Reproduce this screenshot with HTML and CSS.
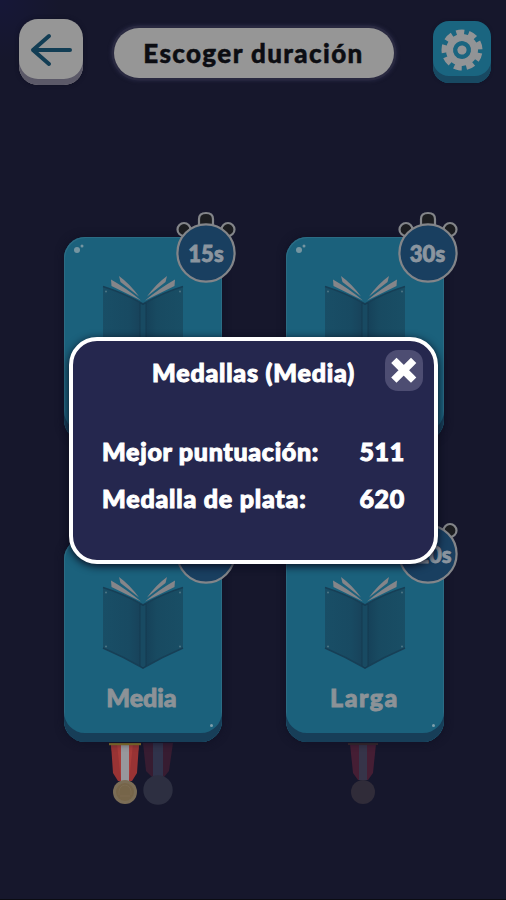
FILE: index.html
```html
<!DOCTYPE html>
<html lang="es">
<head>
<meta charset="utf-8">
<title>Escoger duración</title>
<link rel="stylesheet" href="styles.css">
</head>
<body>
<svg width="0" height="0" class="defs" aria-hidden="true">
  <defs>
    <linearGradient id="coverL"><stop offset="0" stop-color="#194e66"/><stop offset=".65" stop-color="#184a62"/><stop offset="1" stop-color="#184159"/></linearGradient>
    <linearGradient id="coverR"><stop offset="0" stop-color="#153f57"/><stop offset=".35" stop-color="#184a61"/><stop offset="1" stop-color="#194e65"/></linearGradient>
    <symbol id="book" viewBox="0 0 82 92">
      <path d="M9 3.500L9.500 10L39 24.500Q24 12 9 3.500Z M17 0L18.500 6L37 20.500Q28 8 17 0Z M73 3.500L72.500 10L43 24.500Q58 12 73 3.500Z M65 0L63.500 6L45 20.500Q54 8 65 0Z" fill="#858589"/>
      <path d="M1 10.500Q22 17 41 28V91Q22 80 1 71Z" fill="url(#coverL)"/>
      <path d="M81 10.500Q60 17 41 28V91Q60 80 81 71Z" fill="url(#coverR)"/>
      <path d="M1 10.500Q22 17 41 28Q60 17 81 10.500M1 71Q22 80 41 91Q60 80 81 71" fill="none" stroke="#173f56" stroke-width="1.600"/>
      <path d="M38 27L41 28.500L44 27V89L41 91L38 89Z" fill="#184a62" stroke="#143a51" stroke-width="1"/>
      <g fill="#4e7686"><circle cx="4" cy="15.500" r="1"/><circle cx="78" cy="15.500" r="1"/><circle cx="4" cy="69.500" r="1"/><circle cx="78" cy="69.500" r="1"/></g>
    </symbol>
    <symbol id="watch" viewBox="0 0 62 74">
      <g fill="#1c1d20" stroke="#838589" stroke-width="2.200">
        <circle cx="9" cy="18.500" r="6.500"/><circle cx="53" cy="18.500" r="6.500"/>
        <path d="M24 17V8Q24 2 31 2Q38 2 38 8V17Z"/>
      </g>
      <circle cx="31" cy="42" r="28.600" fill="#193f60" stroke="#838589" stroke-width="2.200"/>
    </symbol>
    <symbol id="medal" viewBox="0 0 32 62">
      <path d="M2 1H30L26 32L21 38H11L6 32Z" fill="#a83b39"/>
      <path d="M8 1L12 38H9L4 30L2 1ZM24 1L20 38H23L28 30L30 1Z" fill="#983334"/>
      <path d="M12 1H20V38H12Z" fill="#97979c"/>
      <path d="M0 0H32V2.200H0Z" fill="#9b8129"/>
      <circle cx="16" cy="49" r="12" fill="#7b6d56"/><circle cx="16" cy="49" r="9" fill="#766549"/>
      <path d="M10 52Q9 43 16 42Q23 43 22 52M11 53H21" fill="none" stroke="#7c6b51"/>
    </symbol>
  </defs>
</svg>
<div class="screen">
  <header class="topbar">
    <button class="key key-back" aria-label="Volver">
      <svg viewBox="0 0 64 60"><path d="M51 30H14M30 16L14 30L30 44" fill="none" stroke="#123d54" stroke-width="4" stroke-linecap="round" stroke-linejoin="round"/></svg>
    </button>
    <h1 class="heading"><span>Escoger duración</span></h1>
    <button class="key key-gear" aria-label="Ajustes">
      <svg viewBox="0 0 58 56">
        <g transform="translate(29 28) rotate(10)">
          <circle r="12.500" fill="none" stroke="#929496" stroke-width="7"/>
          <circle r="17" fill="none" stroke="#929496" stroke-width="7" stroke-dasharray="7.500 4.370"/>
          <circle r="4.600" fill="#929496"/>
        </g>
      </svg>
    </button>
  </header>

  <main class="levels">
    <article class="level">
      <div class="card"><svg class="book"><use href="#book"/></svg></div>
      <div class="timer"><svg><use href="#watch"/></svg><span>15s</span></div>
    </article>
    <article class="level">
      <div class="card"><svg class="book"><use href="#book"/></svg></div>
      <div class="timer"><svg><use href="#watch"/></svg><span>30s</span></div>
    </article>
    <article class="level">
      <div class="card"><svg class="book"><use href="#book"/></svg><h2 class="name name-media">Media</h2></div>
      <div class="medals">
        <svg class="medal"><use href="#medal"/></svg>
        <svg class="medal silver" viewBox="0 0 32 62">
          <path d="M1 0H31L27 28L22 34H10L4 28Z" fill="#371c31"/><path d="M11 0H21V34H11Z" fill="#30334b"/>
          <circle cx="16" cy="47" r="14.700" fill="#2d2f41"/>
        </svg>
      </div>
      <div class="timer"><svg><use href="#watch"/></svg><span>60s</span></div>
    </article>
    <article class="level">
      <div class="card"><svg class="book"><use href="#book"/></svg><h2 class="name name-larga">Larga</h2></div>
      <div class="medals medals-center">
        <svg class="medal" viewBox="0 0 32 62">
          <path d="M3 1H29L26 30L21 37H11L6 30Z" fill="#451e34"/><path d="M12 1H20V37H12Z" fill="#363449"/>
          <path d="M1 0H31V2H1Z" fill="#3c2b2d"/><circle cx="16" cy="49" r="12" fill="#302c39"/>
        </svg>
      </div>
      <div class="timer"><svg><use href="#watch"/></svg><span>120s</span></div>
    </article>
  </main>

  <section class="dialog" role="dialog" aria-label="Medallas">
    <h2 class="dialog-title">Medallas (Media)</h2>
    <button class="close" aria-label="Cerrar">
      <svg viewBox="0 0 38 41"><path d="M11.500 13L26 27.500M26 13L11.500 27.500" stroke="#fff" stroke-width="7.500" stroke-linecap="square"/></svg>
    </button>
    <dl class="scores">
      <div class="score"><dt>Mejor puntuación:</dt><dd>511</dd></div>
      <div class="score"><dt class="silver-row">Medalla de plata:</dt><dd>620</dd></div>
    </dl>
  </section>
</div>
</body>
</html>
```

FILE: styles.css
```css
* { box-sizing: border-box; margin: 0; padding: 0; }
body {
  font-family: Lato, "Open Sans", sans-serif;
  font-weight: 900;
  background: #16172c;
}
.defs { position: absolute; }
svg { display: block; }
button { border: 0; font: inherit; }
h1, h2 { font-weight: 900; }

.screen {
  position: relative;
  width: 506px;
  height: 900px;
  overflow: hidden;
  background: radial-gradient(circle at 0 0, #161738, #16172c 60px);
  border-bottom: 1px solid #0b0c12;
}

.topbar {
  display: flex;
  align-items: flex-start;
  justify-content: space-between;
  height: 212px;
  padding: 19px 15px 0 19px;
}
.key-back {
  width: 64px;
  height: 66px;
  border-radius: 19px;
  background: #969696;
  box-shadow: inset 0 -6px 0 #5b5968, 0 0 4px #101124;
}
.key-back svg { width: 64px; height: 60px; }
.heading {
  display: flex;
  align-items: center;
  justify-content: center;
  width: 280px;
  height: 50px;
  margin: 9px 0 0 -9px;
  border-radius: 25px;
  background: #969696;
  box-shadow: 0 0 0 2.5px #292940, 0 0 3px 4px #20213a;
  color: #0c0d12;
  font-size: 26px;
  letter-spacing: 1.4px;
  line-height: 50px;
  -webkit-text-stroke: .5px #0c0d12;
}
.key-gear {
  width: 58px;
  height: 62px;
  margin-top: 2px;
  border-radius: 16px;
  background: #1a6580;
  box-shadow: inset 0 -7px 0 #184962, 0 0 3px #10172a;
}
.key-back svg { margin-top: -4px; }
.key-gear svg { width: 58px; height: 56px; margin-top: -5px; }

.levels {
  display: grid;
  grid-template-columns: 172px 172px;
  grid-template-rows: 301px 301px;
  column-gap: 49.5px;
  padding-left: 64px;
}
.level { position: relative; padding-top: 25px; }
.card {
  position: relative;
  width: 158px;
  height: 204px;
  border-radius: 21px;
  background: #1b617c;
  box-shadow: inset 0 -9px 0 #173e58, inset 1px 1px 0 #2b6c84, inset -1px 0 0 #2b6c84, 0 0 8px #101124;
}
.card::before {
  content: "";
  position: absolute;
  left: 10px;
  top: 10px;
  width: 6px;
  height: 6px;
  border-radius: 50%;
  background: #7595a1;
  box-shadow: 5px -4px 0 -1.5px #7595a1;
}
.card::after {
  content: "";
  position: absolute;
  right: 9px;
  bottom: 15px;
  width: 3px;
  height: 3px;
  border-radius: 50%;
  background: #7e9fac;
}
.book { width: 82px; height: 131px; margin: 0 auto; padding-top: 39px; }
.name {
  text-align: center;
  color: #8c9297;
  font-size: 25px;
  line-height: 30px;
  margin: 13px 0 0 -3px;
  -webkit-text-stroke: .9px #8c9297;
}
.name-larga { margin-left: 0; letter-spacing: 1.5px; }
.timer {
  position: absolute;
  left: 111px;
  top: -1px;
  width: 62px;
  height: 74px;
  color: #8b959f;
  font-size: 22px;
}
.timer svg { width: 62px; height: 74px; }
.timer span {
  position: absolute;
  inset: 28px 0 auto;
  line-height: 30px;
  text-align: center;
  -webkit-text-stroke: .8px #8b959f;
}
.medals { display: flex; gap: 1px; padding-left: 45px; padding-top: 1px; }
.medals-center { padding-left: 61px; }
.medal { width: 32px; height: 62px; }

.dialog {
  position: absolute;
  left: 69px;
  top: 337px;
  width: 369px;
  height: 227px;
  padding: 16px 29px 0;
  border: 4px solid #fff;
  border-radius: 28px;
  background: #25274e;
  box-shadow: 0 2px 9px #090b1c;
  color: #fff;
}
.dialog-title {
  text-align: center;
  font-size: 25px;
  line-height: 30px;
  letter-spacing: .8px;
}
.dialog-title, .scores { -webkit-text-stroke: 1px #fff; }
.close {
  position: absolute;
  right: 11px;
  top: 9px;
  width: 38px;
  height: 41px;
  border-radius: 13px;
  background: #4d4d72;
}
.close svg { width: 38px; height: 41px; }
.scores { display: grid; gap: 17px; padding-top: 49px; }
.score {
  display: flex;
  justify-content: space-between;
  font-size: 25px;
  line-height: 30px;
  letter-spacing: .7px;
}
.silver-row { letter-spacing: .8px; }
```
